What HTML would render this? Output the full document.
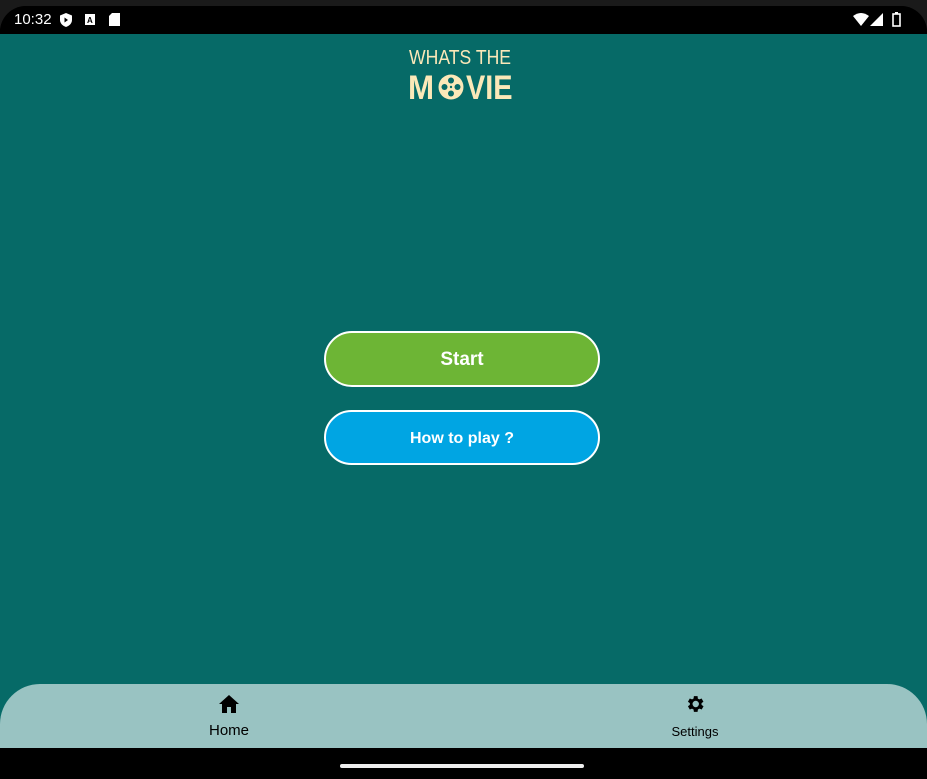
<!DOCTYPE html>
<html><head><style>
*{margin:0;padding:0;box-sizing:border-box}
body{width:927px;height:779px;background:#1a1a1a;position:relative;overflow:hidden;font-family:"Liberation Sans",sans-serif}
.screen{position:absolute;left:0;top:6px;width:927px;height:773px;background:#000;border-radius:26px 26px 0 0;overflow:hidden}
.status{position:absolute;top:0;left:0;width:100%;height:28px;background:#000;color:#fff;font-size:15px}
.app{position:absolute;top:28px;left:0;width:100%;height:714px;background:#066a67}
.btn{position:absolute;left:324px;width:276px;border:2px solid #fff;border-radius:28px;color:#fff;font-weight:bold;text-align:center}
.nav{position:absolute;top:650px;left:0;width:927px;height:64px;background:#99c3c2;border-radius:40px 40px 0 0}
.lg{position:absolute;color:#fbe8b8;white-space:nowrap;transform-origin:0 0}
</style></head><body>
<div class="screen">
<div class="status">
<span style="position:absolute;left:14px;top:5px">10:32</span>
<svg style="position:absolute;left:60px;top:7px" width="12" height="14" viewBox="0 0 12 14"><path d="M6 0L12 2.5V7c0 3.5-3 6-6 7C3 13 0 10.5 0 7V2.5Z" fill="#fff"/><path d="M4.5 4.5L8 7 4.5 9.5Z" fill="#000"/></svg>
<svg style="position:absolute;left:85px;top:8px" width="10" height="11"><rect width="10" height="11" fill="#fff"/><text x="2" y="9" font-size="8" font-weight="bold" fill="#000">A</text></svg>
<svg style="position:absolute;left:109px;top:7px" width="11" height="13"><path d="M3 0H11V13H0V3Z" fill="#fff"/></svg>
<svg style="position:absolute;left:853px;top:7px" width="16" height="13"><path d="M0 3Q8-3 16 3L8 13Z" fill="#fff"/></svg>
<svg style="position:absolute;left:870px;top:7px" width="13" height="13"><path d="M13 0V13H0Z" fill="#fff"/></svg>
<svg style="position:absolute;left:892px;top:6px" width="9" height="15"><rect x="3" y="0" width="3" height="2" fill="#fff"/><rect x="1" y="2" width="7" height="12" fill="none" stroke="#fff" stroke-width="1.6"/></svg>
</div>
<div class="app">
<div class="lg" style="left:409px;top:14px;font-size:20px;line-height:21px;transform:scaleX(0.88)">WHATS THE</div>
<div class="lg" style="left:408px;top:37px;font-size:34px;line-height:34px;font-weight:bold;transform:scaleX(0.92)">M</div>
<div class="lg" style="left:466px;top:37px;font-size:34px;line-height:34px;font-weight:bold;transform:scaleX(0.85)">VIE</div>
<svg style="position:absolute;left:438px;top:40px" width="26" height="26" viewBox="0 0 26 26"><circle cx="13" cy="13" r="12.5" fill="#fbe8b8"/><g fill="#066a67"><circle cx="13" cy="6.5" r="3"/><circle cx="13" cy="19.5" r="3"/><circle cx="6.5" cy="13" r="3"/><circle cx="19.5" cy="13" r="3"/><circle cx="13" cy="13" r="1.2"/></g></svg>
<div class="btn" style="top:297px;height:56px;line-height:54px;background:#6db535;font-size:19px">Start</div>
<div class="btn" style="top:376px;height:55px;line-height:53px;background:#00a5e3;font-size:16px">How to play ?</div>
<div class="nav">
<svg style="position:absolute;left:219px;top:11px" width="20" height="18" viewBox="0 0 20 18"><path d="M10 0L20 9H17V18H12V12H8V18H3V9H0Z" fill="#000"/></svg>
<div style="position:absolute;left:0;width:458px;top:38px;text-align:center;font-size:15px;color:#000">Home</div>
<svg style="position:absolute;left:684px;top:9px" width="22" height="22" viewBox="0 0 24 24"><path fill="#000" d="M19.1 12.9a7 7 0 000-1.8l2.1-1.6-2-3.5-2.5 1a7 7 0 00-1.6-.9L14.8 3.4h-4l-.4 2.7a7 7 0 00-1.6.9l-2.5-1-2 3.5 2.1 1.6a7 7 0 000 1.8l-2.1 1.6 2 3.5 2.5-1a7 7 0 001.6.9l.4 2.7h4l.4-2.7a7 7 0 001.6-.9l2.5 1 2-3.5zM12.8 15.5a3.5 3.5 0 110-7 3.5 3.5 0 010 7z"/></svg>
<div style="position:absolute;left:463px;width:464px;top:40px;text-align:center;font-size:13px;color:#000">Settings</div>
</div>
</div>
<div style="position:absolute;left:340px;top:758px;width:244px;height:4px;border-radius:2px;background:#eee"></div>
</div>
</body></html>
